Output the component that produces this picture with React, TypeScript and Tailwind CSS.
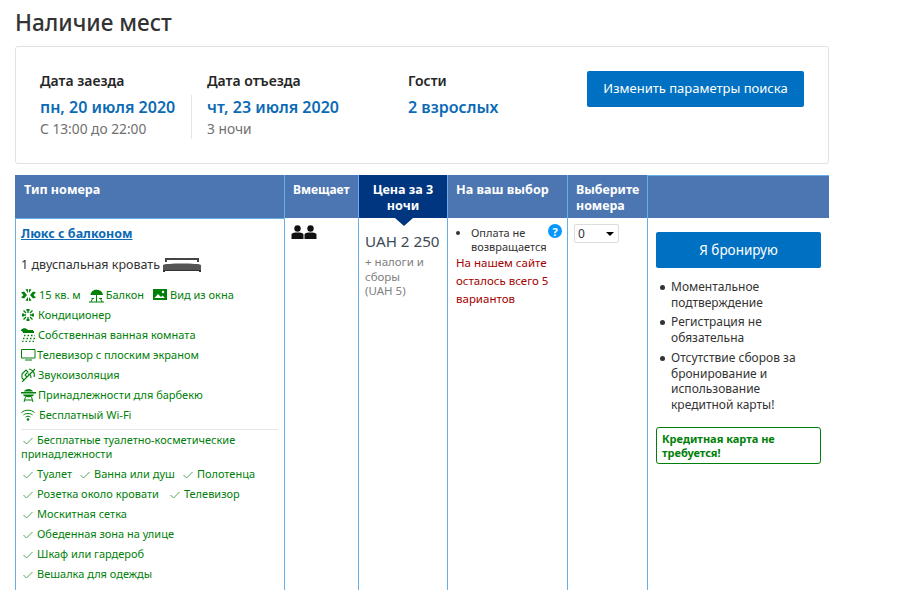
import React from "react";

const G = "text-[#008009]";

function Check() {
  return (
    <svg width="10" height="8" viewBox="0 0 10 8" className="inline-block mr-[4px] ml-[2px] align-[-1px]">
      <path d="M0.5 4 L3.5 7 L9.5 1" fill="none" stroke="#3d9a48" strokeWidth="0.9" />
    </svg>
  );
}

const Size = () => (
  <svg width="15" height="12" viewBox="0 0 15 12" className="inline-block mr-[3px]"><path d="M4.5 0.5 L7 4 L7 0 Z M10.5 0.5 L8 4 L8 0 Z M4.5 11.5 L7 8 L7 12 Z M10.5 11.5 L8 8 L8 12 Z M0 3.5 L3 2.5 L6 6 L3 9.5 L0 8.5 L2.5 6Z M15 3.5 L12 2.5 L9 6 L12 9.5 L15 8.5 L12.5 6Z" fill="#008009" /></svg>
);
const Balcony = () => (
  <svg width="16" height="15" viewBox="0 0 16 15" className="inline-block mr-[1px]"><path d="M1.5 7 C2 0 13 0 14 7Z" fill="#008009" /><path d="M7.5 7V14 M2.5 10.5H5 M10 10.5H13 M3.5 10.5L2 14 M11.5 10.5L13 14 M0 14H15" stroke="#008009" fill="none" /></svg>
);
const Photo = () => (
  <svg width="14" height="12" viewBox="0 0 14 12" className="inline-block mr-[3px]"><path d="M0 0H14V11H0Z" fill="#008009" /><path d="M1.5 9 L5 5 L8 8 L9.5 6.5 L12 9Z" fill="#fff" /><circle cx="10" cy="3" r="1.2" fill="#fff" /></svg>
);
const Ac = () => (
  <svg width="14" height="14" viewBox="0 0 14 14" className="inline-block mr-[3px]"><g stroke="#008009" strokeWidth="1.3" fill="none"><path d="M7 1V5 M7 9V13 M1 7H5 M9 7H13 M2.5 2.5L5 5 M9 9L11.5 11.5 M11.5 2.5L9 5 M5 9L2.5 11.5 M5.5 1.5L7 3L8.5 1.5 M5.5 12.5L7 11L8.5 12.5 M1.5 5.5L3 7L1.5 8.5 M12.5 5.5L11 7L12.5 8.5" /></g></svg>
);
const Shower = () => (
  <svg width="15" height="14" viewBox="0 0 15 14" className="inline-block mr-[2px]"><path d="M0 2 C2 -0.5 5 0 7 2 H12 V3 H13 V5 H2 C2 3.5 1 3 0 3Z" fill="#008009" /><path d="M3 7.5H14 M2 10.5H14 M1 13.5H14" stroke="#008009" strokeWidth="1.5" strokeDasharray="1.5 2" /></svg>
);
const Tv = () => (
  <svg width="15" height="12" viewBox="0 0 15 12" className="inline-block mr-[1px]"><path d="M0.5 0.5H14V9H0.5Z M4 11H11" fill="none" stroke="#008009" /></svg>
);
const Sound = () => (
  <svg width="15" height="14" viewBox="0 0 15 14" className="inline-block mr-[2px]"><path d="M1 6L5 2L7 4L4 7L6 9L3 12L1 10Z M8 1C12 2 14 5 13 9 M7 6C9 6 10 8 10 10 M1 14L14 1" fill="none" stroke="#008009" strokeWidth="1.1" /></svg>
);
const Grill = () => (
  <svg width="15" height="14" viewBox="0 0 15 14" className="inline-block mr-[2px]"><path d="M3 3.5 C4 0 11 0 12 3.5Z M0 4H15V5.5H0Z M2 6.5H13 C12 10 3 10 2 6.5Z" fill="#008009" /><path d="M4.5 9L3 14 M10.5 9L12 14 M3.5 12H11.5" stroke="#008009" fill="none" /></svg>
);
const Wifi = () => (
  <svg width="14" height="12" viewBox="0 0 14 12" className="inline-block mr-[4px]"><path d="M0.5 3.5 C4 0.5 10 0.5 13.5 3.5 M2.5 6 C5 4 9 4 11.5 6 M4.5 8 C6 7 8 7 9.5 8" fill="none" stroke="#008009" /><circle cx="7" cy="10.5" r="1.3" fill="#008009" /></svg>
);

export default function App() {
  return (
    <div className="h-[590px] w-[898px] overflow-hidden bg-white px-[15px] font-['Noto_Sans','Open_Sans',sans-serif] text-[#262626]">
      <h1 className="h-[46px] pt-[7px] text-[22.6px] leading-[32px] font-medium text-[#333]">Наличие мест</h1>

      <section className="flex h-[118px] w-[814px] items-start rounded-[3px] border border-[#e2e2e2] pl-[24px]">
        <div className="w-[151px] pt-[23px]">
          <div className="text-[14px] leading-[22px] font-semibold">Дата заезда</div>
          <div className="text-[16px] leading-[30px] font-semibold text-[#0b6ab5]">пн, 20 июля 2020</div>
          <div className="text-[13.75px] leading-[14px] text-[#707070]">С 13:00 до 22:00</div>
        </div>
        <div className="mt-[48px] h-[44px] w-px bg-[#e4e4e4]" />
        <div className="w-[216px] pl-[15px] pt-[23px]">
          <div className="text-[14px] leading-[22px] font-semibold">Дата отъезда</div>
          <div className="text-[16px] leading-[30px] font-semibold text-[#0b6ab5]">чт, 23 июля 2020</div>
          <div className="text-[13.75px] leading-[14px] text-[#707070]">3 ночи</div>
        </div>
        <div className="w-[179px] pt-[23px]">
          <div className="text-[14px] leading-[22px] font-semibold">Гости</div>
          <div className="text-[16px] leading-[30px] font-semibold text-[#0b6ab5]">2 взрослых</div>
        </div>
        <button className="mt-[24px] h-[36px] w-[217px] rounded-[2px] bg-[#0071c2] text-[13px] text-white">Изменить параметры поиска</button>
      </section>

      <div className="mt-[11px] grid h-[420px] w-[814px] grid-cols-[269px_74px_89px_120px_80px_182px] grid-rows-[43px_1fr]">
        <div className="border-t border-[#4b76b1] bg-[#4c76b2] pl-[9px] pt-[6px] text-[12.6px] leading-[16px] font-bold text-white">Тип номера</div>
        <div className="border-l border-[#6aaee8] bg-[#4c76b2] pl-[8px] pt-[7px] text-[12px] leading-[16px] font-bold text-white">Вмещает</div>
        <div className="relative border-l border-[#6aaee8] bg-[#003580] px-[8px] pt-[7px] text-center text-[12.6px] leading-[16px] font-bold text-white">
          Цена за 3 ночи
          <div className="absolute top-[43px] left-[36px] h-0 w-0 border-x-[9px] border-t-[8px] border-x-transparent border-t-[#003580]" />
        </div>
        <div className="border-l border-[#6aaee8] bg-[#4c76b2] pl-[8px] pt-[7px] text-[12.6px] leading-[16px] font-bold text-white">На ваш выбор</div>
        <div className="border-l border-[#6aaee8] bg-[#4c76b2] pl-[8px] pt-[7px] text-[12.4px] leading-[16px] font-bold text-white">Выберите номера</div>
        <div className="border-l border-t border-[#6aaee8] bg-[#4c76b2]" />

        <div className="border-l border-t border-[#6aaee8] pl-[5px] pr-[6px] pt-[1px]">
          <a className="text-[12.5px] leading-[27px] font-bold text-[#0b6ab5] underline">Люкс с балконом</a>
          <div className="mt-[8px] flex h-[20px] items-center text-[12.5px] text-[#333]">
            1 двуспальная кровать
            <svg width="40" height="16" viewBox="0 0 40 16" className="ml-[2px]"><path d="M3 1H37V5H35V3H5V5H3Z" fill="#444" /><path d="M1 8 C2 6 38 6 39 8V13H1Z" fill="#555" /><path d="M1 13H39V15H37V14H3V15H1Z" fill="#333" /></svg>
          </div>
          <div className={`mt-[10px] text-[11px] leading-[20px] whitespace-nowrap ${G}`}>
            <div className="flex h-[20px] items-center"><Size />15 кв. м<span className="w-[8px]" /><Balcony />Балкон<span className="w-[9px]" /><Photo />Вид из окна</div>
            <div className="flex h-[20px] items-center"><Ac />Кондиционер</div>
            <div className="flex h-[20px] items-center"><Shower />Собственная ванная комната</div>
            <div className="flex h-[20px] items-center"><Tv />Телевизор с плоским экраном</div>
            <div className="flex h-[20px] items-center"><Sound />Звукоизоляция</div>
            <div className="flex h-[20px] items-center"><Grill />Принадлежности для барбекю</div>
            <div className="flex h-[20px] items-center"><Wifi />Бесплатный Wi-Fi</div>
          </div>
          <div className="mt-[4px] border-t border-[#e6e6e6] pt-[3px] text-[11px] whitespace-nowrap text-[#008009]">
            <div className="leading-[14px]"><Check />Бесплатные туалетно-косметические<br />принадлежности</div>
            <div className="mt-[3px] leading-[20px]"><Check />Туалет<span className="inline-block w-[6px]" /><Check />Ванна или душ<span className="inline-block w-[6px]" /><Check />Полотенца</div>
            <div className="leading-[20px]"><Check />Розетка около кровати<span className="inline-block w-[9px]" /><Check />Телевизор</div>
            <div className="leading-[20px]"><Check />Москитная сетка</div>
            <div className="leading-[20px]"><Check />Обеденная зона на улице</div>
            <div className="leading-[20px]"><Check />Шкаф или гардероб</div>
            <div className="leading-[20px]"><Check />Вешалка для одежды</div>
          </div>
        </div>

        <div className="border-l border-[#6aaee8] pl-[6px] pt-[7px]">
          <svg width="26" height="14" viewBox="0 0 26 14"><g fill="#111"><circle cx="6.5" cy="3.5" r="3.2" /><path d="M0.5 14V10 C0.5 8 3 7.5 6.5 7.5 S12.5 8 12.5 10V14Z" /><circle cx="19.5" cy="3.5" r="3.2" /><path d="M13.5 14V10 C13.5 8 16 7.5 19.5 7.5 S25.5 8 25.5 10V14Z" /></g></svg>
        </div>

        <div className="border-l border-[#6aaee8] pl-[6px] pt-[13px]">
          <div className="text-[15.2px] leading-[20px] text-[#3d4a55]">UAH 2 250</div>
          <div className="mt-[4px] text-[11.5px] leading-[14.5px] text-[#808080]">+ налоги и<br />сборы<br />(UAH 5)</div>
        </div>

        <div className="relative border-l border-[#6aaee8] pl-[8px] pt-[8px]">
          <div className="flex items-start text-[11px]">
            <span className="mt-[5px] mr-[11px] h-[4px] w-[4px] rounded-full bg-[#333]" />
            <span className="leading-[14px] text-[#333]">Оплата не<br />возвращается</span>
          </div>
          <div className="text-[11.5px] leading-[18px] text-[#a30000]">На нашем сайте<br />осталось всего 5<br />вариантов</div>
          <span className="absolute top-[6px] right-[5px] flex h-[14px] w-[14px] items-center justify-center rounded-full bg-[#0896ff] text-[11px] leading-none font-bold text-white">?</span>
        </div>

        <div className="border-l border-[#6aaee8] pl-[6px] pt-[6px]">
          <div className="flex h-[19px] w-[45px] items-center justify-between rounded-[2px] border border-[#dcdcdc] pl-[3px] pr-[4px] text-[12px] text-[#333]">
            0
            <span className="h-0 w-0 border-x-[4px] border-t-[4px] border-x-transparent border-t-black" />
          </div>
        </div>

        <div className="border-l border-[#6aaee8] pl-[8px] pt-[14px] pr-[8px]">
          <button className="h-[36px] w-[165px] rounded-[2px] bg-[#0071c2] text-[13.5px] text-white">Я бронирую</button>
          <ul className="mt-[11px] w-[165px] text-[12px] leading-[15.5px] text-[#333]">
            <li className="relative mb-[4px] pl-[15px]"><span className="absolute top-[6px] left-[4px] h-[5px] w-[5px] rounded-full bg-[#333]" />Моментальное подтверждение</li>
            <li className="relative mb-[5px] pl-[15px]"><span className="absolute top-[6px] left-[4px] h-[5px] w-[5px] rounded-full bg-[#333]" />Регистрация не обязательна</li>
            <li className="relative pl-[15px]"><span className="absolute top-[6px] left-[4px] h-[5px] w-[5px] rounded-full bg-[#333]" />Отсутствие сборов за бронирование и использование кредитной карты!</li>
          </ul>
          <div className="mt-[15px] h-[37px] w-[165px] rounded-[3px] border border-[#008009] px-[5px] pt-[4px] text-[11px] leading-[14px] font-bold text-[#008009]">Кредитная карта не требуется!</div>
        </div>
      </div>
    </div>
  );
}
